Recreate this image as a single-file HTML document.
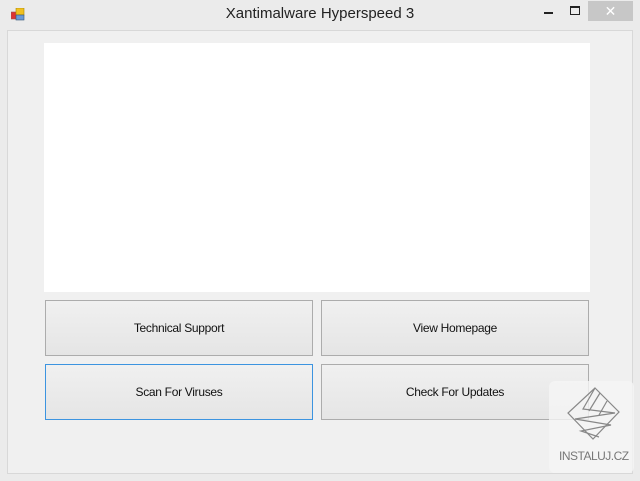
<!DOCTYPE html>
<html><head><style>
*{margin:0;padding:0;box-sizing:border-box}
body{width:640px;height:481px;background:#ebebeb;position:relative;overflow:hidden;font-family:"Liberation Sans",sans-serif}
.title{position:absolute;left:0;top:5px;width:640px;text-align:center;font-size:15px;color:#222}
.client{position:absolute;left:7px;top:30px;width:626px;height:444px;background:#f0f0f0;border:1px solid #d8d8d8}
.canvas{position:absolute;left:44px;top:43px;width:546px;height:249px;background:#fff}
.btn{position:absolute;width:268px;height:56px;border:1px solid #acacac;background:linear-gradient(#f0f0f0,#e5e5e5);font-size:12px;letter-spacing:-0.3px;color:#111;display:flex;align-items:center;justify-content:center}
.close{position:absolute;left:588px;top:1px;width:45px;height:20px;background:#c7c7c7;color:#fff;text-align:center;font-size:14px;line-height:20px}
</style></head><body>
<svg style="position:absolute;left:11px;top:8px" width="14" height="14"><rect x="0" y="4" width="6" height="7" fill="#d33" stroke="#955" stroke-width=".6"/><rect x="5" y="0" width="8" height="7" fill="#f0c020" stroke="#a80" stroke-width=".6"/><rect x="5" y="7" width="8" height="5" fill="#6a9ad8" stroke="#357" stroke-width=".6"/></svg>
<div class="title">Xantimalware Hyperspeed 3</div>
<div style="position:absolute;left:544px;top:12px;width:9px;height:2px;background:#222"></div>
<div style="position:absolute;left:570px;top:6px;width:10px;height:9px;border:1px solid #222;border-top-width:2px"></div>
<div class="close">✕</div>
<div class="client"></div>
<div class="canvas"></div>
<div class="btn" style="left:45px;top:300px">Technical Support</div>
<div class="btn" style="left:321px;top:300px">View Homepage</div>
<div class="btn" style="left:45px;top:364px;border-color:#3c94e0">Scan For Viruses</div>
<div class="btn" style="left:321px;top:364px">Check For Updates</div>
<div style="position:absolute;left:549px;top:381px;width:85px;height:92px;background:rgba(245,245,245,.8);border-radius:6px"></div>
<svg style="position:absolute;left:555px;top:385px" width="80" height="60" fill="none" stroke="#888" stroke-width="1.2">
<path d="M40 3 L64 27 L38 54 L13 28 Z"/><path d="M40 3 L28 24 L60 28 L20 34 L56 40 L26 46 L44 52"/><path d="M45 8 L34 26 M52 16 L44 30"/></svg>
<div style="position:absolute;left:559px;top:449px;font-size:12px;color:#777;letter-spacing:-0.5px">INSTALUJ.CZ</div>
</body></html>
